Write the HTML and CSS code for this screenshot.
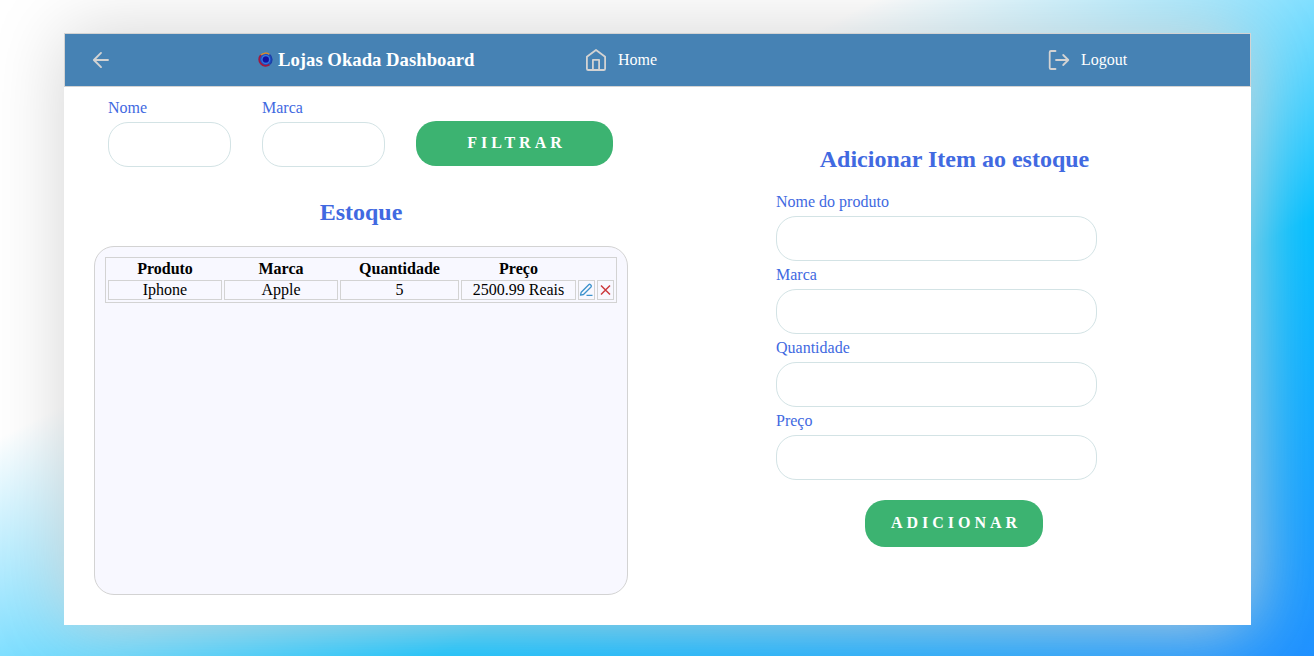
FILE: index.html
```
<!DOCTYPE html>
<html lang="pt-BR">
<head>
<meta charset="utf-8">
<title>Lojas Okada Dashboard</title>
<link rel="stylesheet" href="styles.css">
</head>
<body>
<div class="card">
  <nav class="nav">
    <a class="back"><svg width="24" height="24" viewBox="0 0 24 24" fill="none" stroke="lightgray" stroke-width="1.900"><path d="M18 12H4M11 4.900 3.900 12l7.100 7.100" stroke-linecap="round" stroke-linejoin="round"/></svg></a>
    <div class="brand">
      <svg width="16" height="16" viewBox="0 0 16 16" fill="none">
        <circle cx="7.500" cy="7.500" r="6" fill="#1c4fc4"/>
        <path d="M2.900 3.100A6.400 6.400 0 0 1 11.500 2.500" stroke="#d98a2b" stroke-width="1.500"/>
        <path d="M2.900 3.100A6.400 6.400 0 0 0 11.500 12.500" stroke="#a01840" stroke-width="1.900"/>
        <path d="M11.500 2.500A6.400 6.400 0 0 1 11.500 12.500" stroke="#1b3fa8" stroke-width="1.500"/>
        <circle cx="7.800" cy="7.500" r="3.900" stroke="#3a78dc" stroke-width="1.100"/>
        <circle cx="7.800" cy="7.500" r="3" fill="#1410a0"/>
      </svg>
      <span>Lojas Okada Dashboard</span>
    </div>
    <a class="link home"><svg width="24" height="24" viewBox="0 0 24 24" fill="none" stroke="lightgray" stroke-width="1.800" stroke-linejoin="round"><path d="M2.900 8.800 12 2l9.100 6.800V20.700a1.300 1.300 0 0 1-1.300 1.300H4.200a1.300 1.300 0 0 1-1.300-1.300z"/><path d="M8.900 22V11.800h6.200V22"/></svg><span>Home</span></a>
    <a class="link logout"><svg width="24" height="24" viewBox="0 0 24 24" fill="none" stroke="lightgray" stroke-width="1.800" stroke-linecap="round" stroke-linejoin="round"><path d="M8.500 3H4A1.300 1.300 0 0 0 2.700 4.300v15.400A1.300 1.300 0 0 0 4 21h4.500M9 12h12.300M16.200 7 21.300 12l-5.100 5"/></svg><span>Logout</span></a>
  </nav>
  <main class="content">
    <section class="stock">
      <form class="filters">
        <label class="field">Nome<input type="text"></label>
        <label class="field">Marca<input type="text"></label>
        <button type="button" class="btn">FILTRAR</button>
      </form>
      <h2 class="title">Estoque</h2>
      <div class="panel">
        <table class="table">
          <colgroup><col class="c-prod"><col class="c-brand"><col class="c-qty"><col class="c-price"><col class="c-icon"><col class="c-icon"></colgroup>
          <tr><th>Produto</th><th>Marca</th><th>Quantidade</th><th>Preço</th></tr>
          <tr><td>Iphone</td><td>Apple</td><td>5</td><td>2500.99 Reais</td>
            <td><svg width="15" height="16" viewBox="0 0 15 16" fill="none" stroke="#3d92cc" stroke-width="1.300" stroke-linejoin="round"><path d="M1.500 13.200 2.200 10.200 9.700 2.700a1.300 1.300 0 0 1 1.800 0l.5.500a1.300 1.300 0 0 1 0 1.800L4.500 12.500zM7.500 13.400H13.500"/></svg></td>
            <td><svg width="15" height="16" viewBox="0 0 15 16" fill="none" stroke="#cc3a3f" stroke-width="1.500"><path d="m3 3.500 9 9M12 3.500l-9 9"/></svg></td></tr>
        </table>
      </div>
    </section>
    <form class="add">
      <h2 class="title">Adicionar Item ao estoque</h2>
      <label class="field">Nome do produto<input type="text"></label>
      <label class="field">Marca<input type="text"></label>
      <label class="field">Quantidade<input type="text"></label>
      <label class="field">Preço<input type="text"></label>
      <button type="button" class="btn">ADICIONAR</button>
    </form>
  </main>
</div>
</body>
</html>
```
FILE: styles.css
```
* { box-sizing: border-box; }
body {
  margin: 0;
  height: 656px;
  overflow: hidden;
  padding: 33px 63px 31px 64px;
  font: 16px/18px "Liberation Serif", "Times New Roman", serif;
  background: linear-gradient(to bottom right, white, white, deepskyblue, dodgerblue);
}
svg { display: block; flex: none; }
.card { height: 592px; background: white; box-shadow: 0 0 70px lightgray; }
.nav {
  display: grid;
  grid-template-columns: 167px 327px 463px 1fr;
  align-items: center;
  height: 54px;
  padding-left: 25px;
  border: 1px solid lightgray;
  background: steelblue;
  color: white;
}
.brand { display: flex; align-items: center; gap: 4px; padding-left: 1px; font-size: 18.72px; font-weight: bold; }
.link { display: flex; align-items: center; gap: 10px; }
.content { display: flex; }
.stock { width: 534px; margin-left: 30px; }
.filters { display: flex; align-items: flex-end; padding: 12px 0 0 14px; }
.field { display: block; color: royalblue; }
.field input {
  display: block;
  width: 100%;
  height: 45px;
  margin-top: 5px;
  border: 1px solid #d3e3e5;
  border-radius: 20px;
  background: white;
}
.filters .field { width: 123px; margin-right: 31px; }
.btn {
  border: 0;
  border-radius: 20px;
  padding: 0 0 2px 4px;
  background: mediumseagreen;
  color: white;
  font: bold 16px/18px "Liberation Serif", "Times New Roman", serif;
  letter-spacing: 4px;
}
.filters .btn { width: 197px; height: 45px; margin-bottom: 1px; }
.title { margin: 0; color: royalblue; font-size: 24px; line-height: 28px; text-align: center; }
.stock .title { padding: 31px 0 20px; }
.panel { height: 349px; padding: 10px; border: 1px solid lightgray; border-radius: 20px; background: ghostwhite; }
.table { width: 512px; table-layout: fixed; border: 1px solid lightgray; border-spacing: 2px; text-align: center; }
.table th, .table td { height: 18px; padding: 0; }
.table td { height: 20px; border: 1px solid lightgray; }
.c-prod, .c-brand { width: 114px; }
.c-qty { width: 119px; }
.c-price { width: 115px; }
.c-icon { width: 17px; }
.add { width: 321px; margin: 58px 0 0 148px; }
.add .title { margin-left: 36px; padding-bottom: 20px; white-space: nowrap; }
.add .field { margin-bottom: 5px; }
.add .btn { display: block; width: 178px; height: 47px; margin: 20px 0 0 89px; }
```
